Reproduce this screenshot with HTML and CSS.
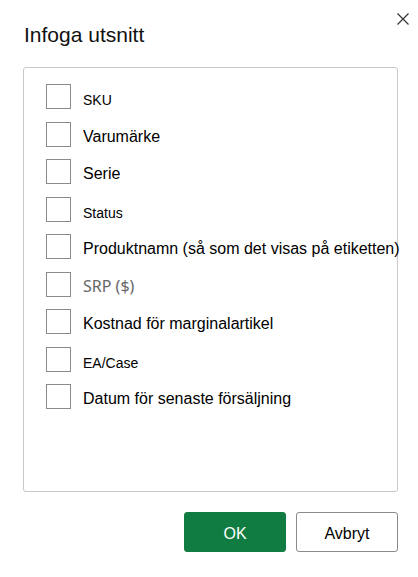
FILE: index.html
```html
<!DOCTYPE html>
<html lang="sv">
<head>
<meta charset="utf-8">
<title>Infoga utsnitt</title>
<link rel="stylesheet" href="styles.css">
</head>
<body>
<div class="dialog">
  <button class="close" aria-label="Stäng">
    <svg width="12" height="12" viewBox="0 0 12 12"><path d="M0.5 0.5 L11.5 11.5 M11.5 0.5 L0.5 11.5" stroke="#333" stroke-width="1.2" fill="none"/></svg>
  </button>
  <h1 class="title">Infoga utsnitt</h1>
  <div class="list">
    <label class="row"><span class="box"></span><span class="text small">SKU</span></label>
    <label class="row"><span class="box"></span><span class="text">Varumärke</span></label>
    <label class="row"><span class="box"></span><span class="text">Serie</span></label>
    <label class="row"><span class="box"></span><span class="text small">Status</span></label>
    <label class="row"><span class="box"></span><span class="text">Produktnamn (så som det visas på etiketten)</span></label>
    <label class="row"><span class="box"></span><span class="text muted">SRP ($)</span></label>
    <label class="row"><span class="box"></span><span class="text">Kostnad för marginalartikel</span></label>
    <label class="row"><span class="box"></span><span class="text small">EA/Case</span></label>
    <label class="row"><span class="box"></span><span class="text">Datum för senaste försäljning</span></label>
  </div>
  <div class="actions">
    <button class="btn primary">OK</button>
    <button class="btn secondary">Avbryt</button>
  </div>
</div>
</body>
</html>
```
FILE: styles.css
```css
html, body {
  margin: 0;
  padding: 0;
  background: #ffffff;
}
body {
  font-family: "Liberation Sans", Arial, sans-serif;
  color: #000;
}
.dialog {
  position: relative;
  width: 418px;
  height: 577px;
  box-sizing: border-box;
  padding: 23px 20px 0 23px;
}
.close {
  position: absolute;
  top: 13px;
  right: 9px;
  width: 12px;
  height: 12px;
  padding: 0;
  margin: 0;
  border: none;
  background: none;
  display: flex;
}
.title {
  margin: 0 0 20px 1px;
  font-size: 21px;
  font-weight: normal;
  line-height: 24px;
  color: #111;
}
.list {
  height: 425px;
  box-sizing: border-box;
  border: 1px solid #c8c8c8;
  border-radius: 3px;
  padding: 16px 0 0 22px;
  display: flex;
  flex-direction: column;
  gap: 12.5px;
}
.row {
  display: flex;
  align-items: flex-start;
  height: 25px;
}
.box {
  width: 25px;
  height: 25px;
  box-sizing: border-box;
  border: 1px solid #8a8a8a;
  flex: none;
}
.text {
  margin-left: 12px;
  margin-top: 3px;
  font-size: 16px;
  line-height: 24px;
  color: #000;
  white-space: nowrap;
}
.text.small {
  font-size: 14px;
  margin-top: 4px;
}
.text.muted {
  font-family: "Noto Sans", sans-serif;
  color: #666;
  margin-top: 2px;
}
.actions {
  display: flex;
  justify-content: flex-end;
  gap: 10px;
  margin-top: 20px;
}
.btn {
  width: 102px;
  height: 40px;
  box-sizing: border-box;
  border-radius: 3px;
  font-family: "Liberation Sans", Arial, sans-serif;
  font-size: 16px;
  padding: 4px 0 0 0;
  cursor: pointer;
}
.primary {
  background: #107c41;
  border: 1px solid #107c41;
  color: #fff;
}
.secondary {
  background: #fff;
  border: 1px solid #8a8a8a;
  color: #000;
}
```
